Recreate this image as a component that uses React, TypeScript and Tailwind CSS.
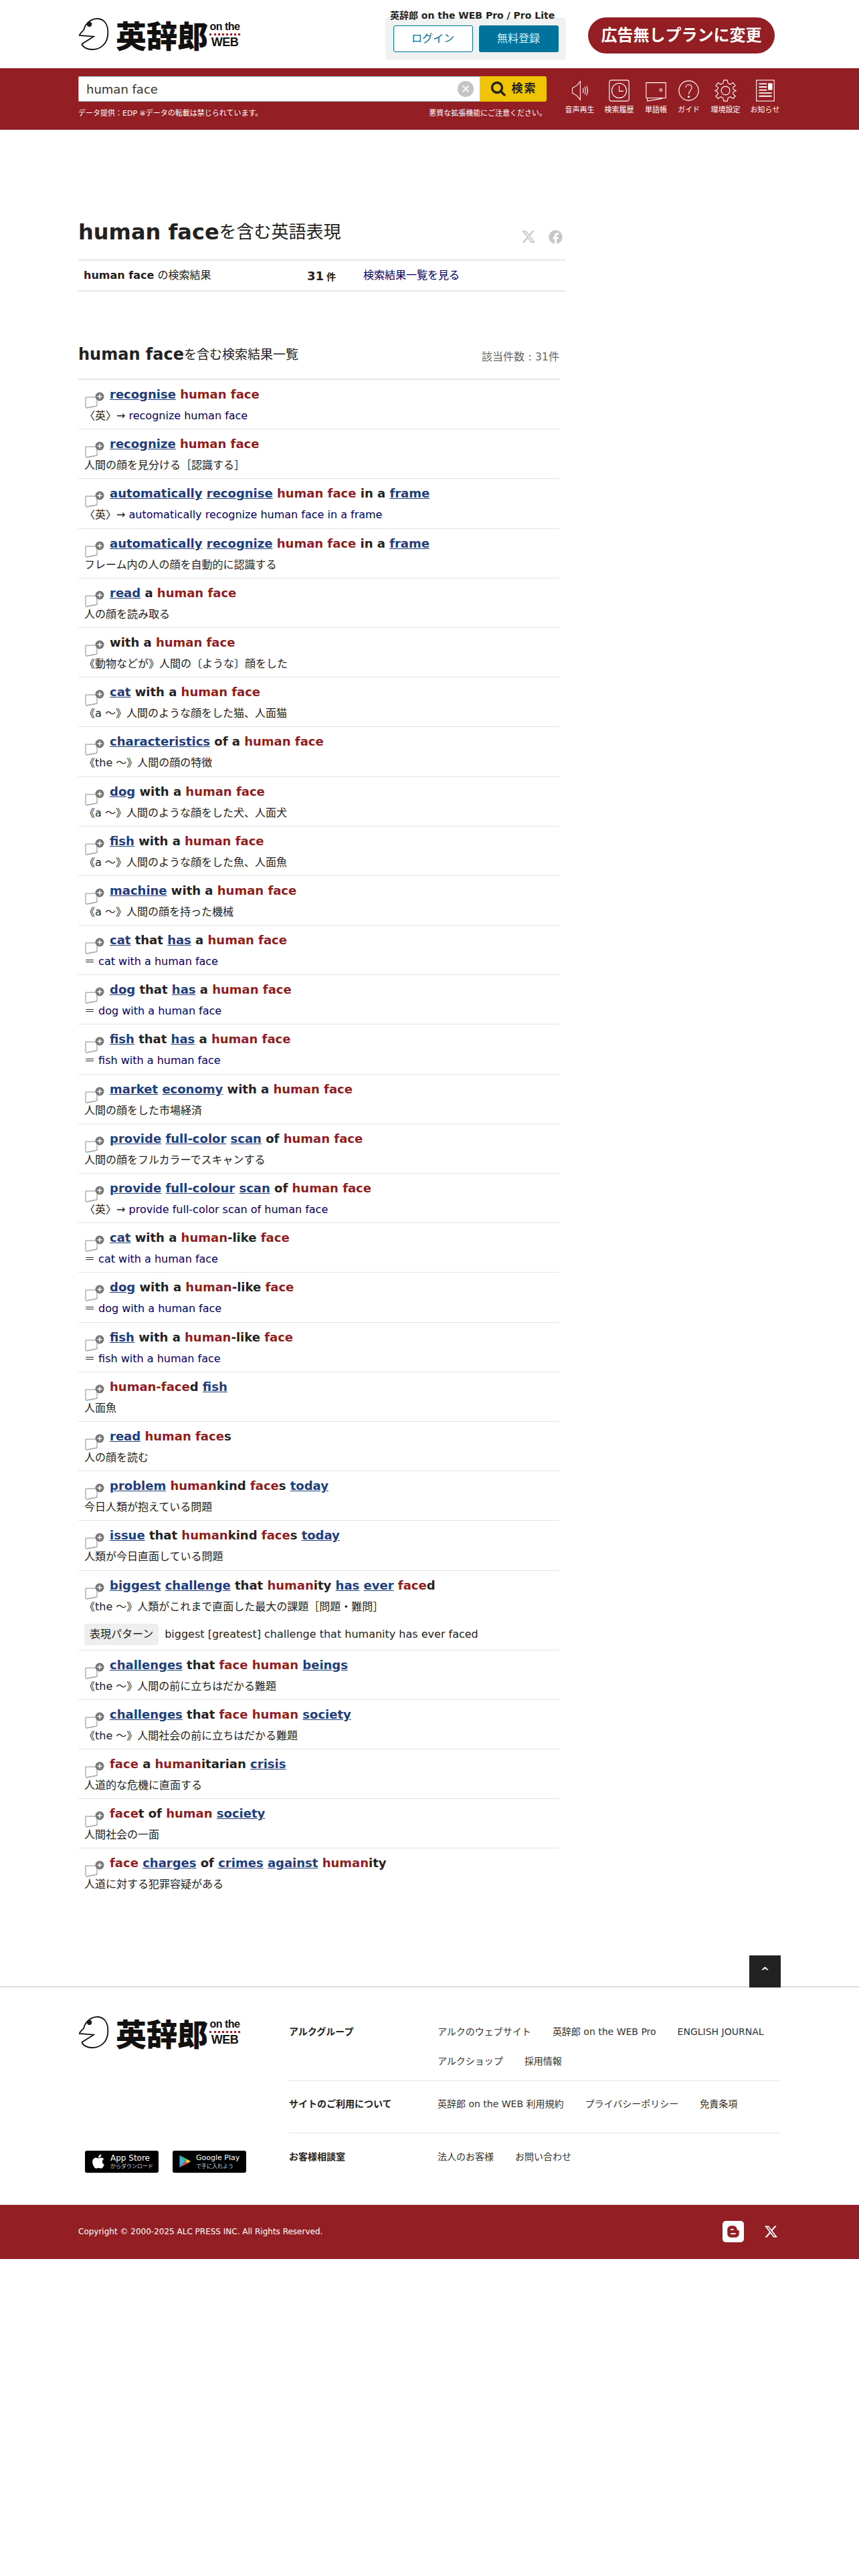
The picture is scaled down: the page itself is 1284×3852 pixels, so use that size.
import { FaApple, FaBloggerB, FaFacebook } from "react-icons/fa";

const XLogo = ({ className }: { className?: string }) => (
  <svg viewBox="0 0 24 24" className={className} fill="currentColor">
    <path d="M18.901 1.153h3.68l-8.04 9.19L24 22.846h-7.406l-5.8-7.584-6.638 7.584H.474l8.6-9.83L0 1.154h7.594l5.243 6.932ZM17.61 20.644h2.039L6.486 3.24H4.298Z" />
  </svg>
);

const Logo = () => (
  <div className="flex h-[50px] w-[241px] shrink-0 items-center">
    <svg viewBox="0 0 50 54" className="h-[50px] w-[46px] shrink-0" fill="none" stroke="#111" strokeWidth="2">
      <path d="M9 20 C12 7 24 1 33 2 C45 4 49 15 48 28 C47 43 36 52 23 52 C14 52 7 48 6 43 L25 31 L2 29 C3 25 7 23 9 20 Z" />
      <circle cx="18" cy="11" r="3" />
      <circle cx="18" cy="11" r="1" fill="#111" />
    </svg>
    <span className="ml-[10px] text-[46px] leading-none font-black whitespace-nowrap text-[#111] [font-family:'Noto_Sans_CJK_JP',sans-serif]">
      英辞郎
    </span>
    <div className="ml-[2px] flex w-[46px] shrink-0 flex-col items-center [font-family:'Liberation_Sans',sans-serif] font-bold text-[#111]">
      <span className="text-[16px] leading-[17px] tracking-[-0.5px] whitespace-nowrap">on the</span>
      <span className="my-[2px] h-[3px] w-full border-t-[3px] border-dotted border-[#931e23]" />
      <span className="text-[18px] leading-[17px] tracking-[-0.5px]">WEB</span>
    </div>
  </div>
);

const NavIcon = ({ label, className, children }: { label: string; className: string; children: React.ReactNode }) => (
  <div className={"flex flex-col items-center " + className}>
    <svg viewBox="0 0 36 36" className="h-[33px] w-[33px]" fill="none" stroke="#fff" strokeWidth="1.2">
      {children}
    </svg>
    <span className="mt-[5px] text-[11px] leading-[16px] whitespace-nowrap text-white">{label}</span>
  </div>
);

const Nav = () => (
  <div className="mt-[17px] ml-[20px] flex">
    <NavIcon label="音声再生" className="w-[59px]">
      <path d="M6 14 L13 10 L19 3 V33 L13 26 L6 22 Z" />
      <path d="M23 14 Q25 18 23 22 M26 12 Q29 18 26 24 M29 10 Q33 18 29 26" />
    </NavIcon>
    <NavIcon label="検索履歴" className="w-[59px]">
      <rect x="2" y="1" width="32" height="34" rx="3" />
      <circle cx="18" cy="18" r="12" />
      <path d="M18 10 V19 H25" />
    </NavIcon>
    <NavIcon label="単語帳" className="w-[51px]">
      <path d="M2 5 H34 V30 H2 Z M4 30 V35 L28 31" />
      <circle cx="26" cy="17" r="2" />
    </NavIcon>
    <NavIcon label="ガイド" className="w-[47px]">
      <circle cx="18" cy="18" r="16" />
      <path d="M13 13 C13 7 23 7 23 13 C23 18 18 18 18 24" />
      <circle cx="18" cy="28" r="1" fill="#fff" />
    </NavIcon>
    <NavIcon label="環境設定" className="w-[63px]">
      <circle cx="18" cy="18" r="7" />
      <path d="M15 1 H21 L22 6 L26 8 L30 5 L34 10 L30 13 L31 16 L35 18 L31 20 L30 23 L34 27 L30 31 L26 28 L22 30 L21 35 H15 L14 30 L10 28 L6 31 L2 27 L6 23 L5 20 L1 18 L5 16 L6 13 L2 10 L6 5 L10 8 L14 6 Z" />
    </NavIcon>
    <NavIcon label="お知らせ" className="w-[55px]">
      <rect x="4" y="1" width="29" height="34" />
      <path d="M8 7 H21 M8 12 H21 M8 17 H21 M8 22 H29 M8 27 H29" strokeWidth="2" />
      <rect x="23" y="6" width="7" height="11" fill="#fff" stroke="none" />
    </NavIcon>
  </div>
);

// [x] は青リンク、{x} は赤字、それ以外は黒の太字
const renderTitle = (s: string) =>
  s.split(/(\[[^\]]*\]|\{[^}]*\})/).map((p, i) => {
    if (p.startsWith("["))
      return (
        <span key={i} className="text-[#1d3d7c] underline">
          {p.slice(1, -1)}
        </span>
      );
    if (p.startsWith("{"))
      return (
        <span key={i} className="text-[#8f1d21]">
          {p.slice(1, -1)}
        </span>
      );
    return <span key={i}>{p}</span>;
  });

type Row = { t: string; d: string; link?: string; pattern?: string };

const rows: Row[] = [
  { t: "[recognise] {human face}", d: "〈英〉→ ", link: "recognize human face" },
  { t: "[recognize] {human face}", d: "人間の顔を見分ける［認識する］" },
  { t: "[automatically] [recognise] {human face} in a [frame]", d: "〈英〉→ ", link: "automatically recognize human face in a frame" },
  { t: "[automatically] [recognize] {human face} in a [frame]", d: "フレーム内の人の顔を自動的に認識する" },
  { t: "[read] a {human face}", d: "人の顔を読み取る" },
  { t: "with a {human face}", d: "《動物などが》人間の〔ような〕顔をした" },
  { t: "[cat] with a {human face}", d: "《a ～》人間のような顔をした猫、人面猫" },
  { t: "[characteristics] of a {human face}", d: "《the ～》人間の顔の特徴" },
  { t: "[dog] with a {human face}", d: "《a ～》人間のような顔をした犬、人面犬" },
  { t: "[fish] with a {human face}", d: "《a ～》人間のような顔をした魚、人面魚" },
  { t: "[machine] with a {human face}", d: "《a ～》人間の顔を持った機械" },
  { t: "[cat] that [has] a {human face}", d: "＝ ", link: "cat with a human face" },
  { t: "[dog] that [has] a {human face}", d: "＝ ", link: "dog with a human face" },
  { t: "[fish] that [has] a {human face}", d: "＝ ", link: "fish with a human face" },
  { t: "[market] [economy] with a {human face}", d: "人間の顔をした市場経済" },
  { t: "[provide] [full-color] [scan] of {human face}", d: "人間の顔をフルカラーでスキャンする" },
  { t: "[provide] [full-colour] [scan] of {human face}", d: "〈英〉→ ", link: "provide full-color scan of human face" },
  { t: "[cat] with a {human}-like {face}", d: "＝ ", link: "cat with a human face" },
  { t: "[dog] with a {human}-like {face}", d: "＝ ", link: "dog with a human face" },
  { t: "[fish] with a {human}-like {face}", d: "＝ ", link: "fish with a human face" },
  { t: "{human-face}d [fish]", d: "人面魚" },
  { t: "[read] {human face}s", d: "人の顔を読む" },
  { t: "[problem] {human}kind {face}s [today]", d: "今日人類が抱えている問題" },
  { t: "[issue] that {human}kind {face}s [today]", d: "人類が今日直面している問題" },
  {
    t: "[biggest] [challenge] that {human}ity [has] [ever] {face}d",
    d: "《the ～》人類がこれまで直面した最大の課題［問題・難問］",
    pattern: "biggest [greatest] challenge that humanity has ever faced",
  },
  { t: "[challenges] that {face} {human} [beings]", d: "《the ～》人間の前に立ちはだかる難題" },
  { t: "[challenges] that {face} {human} [society]", d: "《the ～》人間社会の前に立ちはだかる難題" },
  { t: "{face} a {human}itarian [crisis]", d: "人道的な危機に直面する" },
  { t: "{face}t of {human} [society]", d: "人間社会の一面" },
  { t: "{face} [charges] of [crimes] [against] {human}ity", d: "人道に対する犯罪容疑がある" },
];

const AddIcon = () => (
  <svg viewBox="0 0 30 30" className="absolute top-[14px] left-[10px] h-[30px] w-[30px]">
    <path d="M1 12 H18 V25 L3 28 L1 27 Z" fill="#fff" stroke="#888" strokeWidth="1" />
    <path d="M2 28 L18 25" stroke="#aaa" strokeWidth="1.5" />
    <circle cx="22" cy="11" r="6.5" fill="#777" />
    <path d="M22 7.5 V14.5 M18.5 11 H25.5" stroke="#fff" strokeWidth="1.6" />
  </svg>
);

const ResultRow = ({ row }: { row: Row }) => (
  <li className="relative border-b border-[#e4e4e4] pt-[9px] pb-[6.2px] pl-[9px] last:border-b-0">
    <AddIcon />
    <div className="h-[26px] pl-[38px] text-[18px] leading-[26px] font-bold whitespace-nowrap text-[#222]">{renderTitle(row.t)}</div>
    <div className="mt-[6px] h-[26px] text-[16px] leading-[26px] text-[#222]">
      {row.d}
      {row.link && <span className="text-[#000066]">{row.link}</span>}
    </div>
    {row.pattern && (
      <div className="mt-[12px] mb-[1px] flex h-[32px] items-center gap-[9px] text-[16px] text-[#222]">
        <span className="flex h-[32px] items-center rounded-[4px] bg-[#eeeeee] px-[8px]">表現パターン</span>
        {row.pattern}
      </div>
    )}
  </li>
);

const FooterRow = ({ label, links, className }: { label: string; links: string[]; className: string }) => (
  <div className={"flex " + className}>
    <div className="w-[222px] shrink-0 text-[14px] leading-[36px] font-bold text-[#222]">{label}</div>
    <div className="flex flex-wrap gap-x-[32px] pt-[2px] text-[14px] leading-[32px] text-[#333]">
      {links.map((l) => (
        <span key={l} className="whitespace-nowrap">
          {l}
        </span>
      ))}
    </div>
  </div>
);

export default function App() {
  return (
    <div className="min-h-[3852px] bg-white [font-family:'DejaVu_Sans','Noto_Sans_CJK_JP',sans-serif] text-[#222]">
      <header className="flex h-[102px] items-center px-[117px]">
        <Logo />
        <div className="relative mt-[14px] ml-[218px] flex h-[64px] w-[270px] shrink-0 items-center justify-center gap-[9px] rounded-[5px] bg-[#f0f1f1]">
          <span className="absolute -top-[14px] left-[7px] text-[14px] leading-[22px] font-bold whitespace-nowrap">英辞郎 on the WEB Pro / Pro Lite</span>
          <span className="flex h-[40px] w-[119px] items-center justify-center rounded-[3px] border border-[#00739c] bg-white text-[16px] text-[#00739c]">ログイン</span>
          <span className="flex h-[40px] w-[119px] items-center justify-center rounded-[3px] bg-[#00739c] text-[16px] text-[#d9f2f7]">無料登録</span>
        </div>
        <div className="mt-[4px] ml-[33px] flex h-[54px] w-[279px] shrink-0 items-center justify-center rounded-[27px] bg-[#931e23] text-[24px] font-bold text-white">広告無しプランに変更</div>
      </header>

      <div className="flex h-[92px] bg-[#931e23] pl-[117px]">
        <div className="w-[700px]">
          <div className="mt-[12px] flex h-[38px] overflow-hidden rounded-[3px]">
            <div className="flex flex-1 items-center border border-[#9fc5cf] bg-white pr-[9px] pl-[11px] text-[18px] text-[#333]">
              <span className="flex-1">human face</span>
              <span className="flex h-[24px] w-[24px] items-center justify-center rounded-full bg-[#c4c4c4] text-[17px] leading-none text-white">✕</span>
            </div>
            <div className="flex w-[99px] items-center justify-center gap-[8px] bg-[#f0c400] text-[17px] font-bold tracking-[2px] text-[#222]">
              <svg viewBox="0 0 24 24" className="h-[24px] w-[24px]" fill="none" stroke="#222" strokeWidth="3.4">
                <circle cx="10" cy="10" r="7.5" />
                <path d="M15.5 15.5 L22 22" />
              </svg>
              検索
            </div>
          </div>
          <div className="mt-[10px] flex justify-between text-[11px] leading-[16px] text-white">
            <span>データ提供：EDP ※データの転載は禁じられています。</span>
            <span>悪質な拡張機能にご注意ください。</span>
          </div>
        </div>
        <Nav />
      </div>

      <main className="ml-[117px] w-[728px]">
        <div className="mt-[124px] flex items-center justify-between">
          <h1 className="flex h-[58px] items-center text-[32px]">
            <b>human face</b>
            <span className="text-[26px]">を含む英語表現</span>
          </h1>
          <div className="mt-[14px] flex items-center gap-[20px] pr-[4px] text-[#c8c8c8]">
            <XLogo className="h-[24px] w-[20px]" />
            <FaFacebook className="h-[21px] w-[21px]" />
          </div>
        </div>
        <div className="mt-[12px] flex h-[48px] items-center border-y-2 border-[#e6e6e6] pl-[8px] text-[16px]">
          <span className="w-[334px]">
            <b>human face</b> の検索結果
          </span>
          <b className="w-[84px] text-[18px]">
            31<span className="ml-[4px] text-[14px]">件</span>
          </b>
          <span className="text-[#000066]">検索結果一覧を見る</span>
        </div>

        <div className="mt-[74px] w-[719px]">
          <div className="flex items-center justify-between border-b-2 border-[#e6e6e6] pb-[16px]">
            <h2 className="flex h-[40px] items-center text-[24px]">
              <b>human face</b>
              <span className="text-[19px]">を含む検索結果一覧</span>
            </h2>
            <span className="mt-[8px] text-[16px] text-[#666]">該当件数 : 31件</span>
          </div>
          <ul>
            {rows.map((r) => (
              <ResultRow key={r.t} row={r} />
            ))}
          </ul>
        </div>
      </main>

      <footer className="relative mt-[132px] border-t-2 border-[#dcdcdc]">
        <div className="absolute -top-[48px] left-[1120px] flex h-[48px] w-[47px] items-center justify-center bg-[#222] text-[16px] font-bold text-white">^</div>
        <div className="flex h-[325px] px-[117px] pt-[42px]">
          <div className="flex w-[315px] flex-col justify-between pb-[48px]">
            <Logo />
            <div className="flex gap-[21px] pl-[10px]">
              <div className="flex h-[33px] w-[110px] items-center gap-[8px] rounded-[3px] bg-black pl-[10px] text-white">
                <FaApple className="h-[24px] w-[20px]" />
                <div className="flex flex-col">
                  <span className="text-[12px] leading-[14px]">App Store</span>
                  <span className="text-[8px] leading-[11px] text-[#ccc]">からダウンロード</span>
                </div>
              </div>
              <div className="flex h-[33px] w-[110px] items-center gap-[7px] rounded-[3px] bg-black pl-[8px] text-white">
                <svg viewBox="0 0 24 24" className="h-[22px] w-[20px]">
                  <path d="M3 1 L13 12 L3 23 Z" fill="#3bb6e8" />
                  <path d="M3 1 L17 8.5 L13 12 Z" fill="#35c96f" />
                  <path d="M3 23 L17 15.5 L13 12 Z" fill="#e8454a" />
                  <path d="M17 8.5 L23 12 L17 15.5 L13 12 Z" fill="#f6c02c" />
                </svg>
                <div className="flex flex-col">
                  <span className="text-[11px] leading-[14px]">Google Play</span>
                  <span className="text-[8px] leading-[11px] text-[#ccc]">で手に入れよう</span>
                </div>
              </div>
            </div>
          </div>
          <div className="flex-1 pt-[6px]">
            <FooterRow label="アルクグループ" links={["アルクのウェブサイト", "英辞郎 on the WEB Pro", "ENGLISH JOURNAL", "アルクショップ", "採用情報"]} className="h-[92px] border-b border-[#e4e4e4]" />
            <FooterRow label="サイトのご利用について" links={["英辞郎 on the WEB 利用規約", "プライバシーポリシー", "免責条項"]} className="h-[78px] border-b border-[#e4e4e4] pt-[16px]" />
            <FooterRow label="お客様相談室" links={["法人のお客様", "お問い合わせ"]} className="h-[78px] pt-[17px]" />
          </div>
        </div>
        <div className="flex h-[81px] items-center justify-between bg-[#931e23] px-[117px] text-[12px] text-white">
          <span>Copyright © 2000-2025 ALC PRESS INC. All Rights Reserved.</span>
          <div className="flex items-center gap-[31px] pr-[5px]">
            <span className="flex h-[32px] w-[32px] items-center justify-center rounded-[5px] bg-white text-[#931e23]">
              <FaBloggerB className="h-[20px] w-[20px]" />
            </span>
            <XLogo className="h-[20px] w-[19px]" />
          </div>
        </div>
      </footer>
    </div>
  );
}
